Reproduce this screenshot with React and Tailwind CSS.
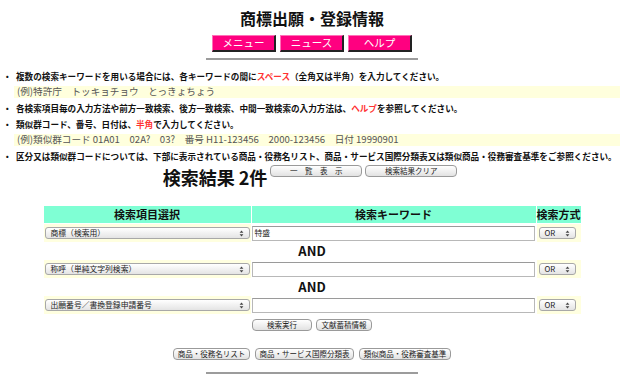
import React from "react";

const jp = "font-['Hiragino_Kaku_Gothic_Pro','Noto_Sans_CJK_JP',sans-serif]";

function Arrows() {
  return (
    <svg width="5" height="7" viewBox="0 0 5 7" className="shrink-0">
      <path d="M0.6 2.8L2.5 0.6L4.4 2.8Z M0.6 4.2L2.5 6.4L4.4 4.2Z" fill="#444" />
    </svg>
  );
}

function FakeSelect({ label, className = "" }) {
  return (
    <div
      className={`flex h-[12px] items-center justify-between rounded-[3px] border border-[#a8a8a8] bg-gradient-to-b from-white to-[#e4e4e4] px-[5px] text-[7.8px] leading-none text-[#222] ${className}`}
    >
      <span className="whitespace-nowrap">{label}</span>
      <Arrows />
    </div>
  );
}

function SmallButton({ children, className = "" }) {
  return (
    <button
      className={`flex h-[12px] items-center justify-center rounded-[4px] border border-[#9a9a9a] bg-gradient-to-b from-white to-[#e2e2e2] text-[7.5px] leading-none whitespace-nowrap text-[#222] ${className}`}
    >
      {children}
    </button>
  );
}

function PinkButton({ children }) {
  return (
    <button className="flex h-[17px] w-[64px] items-center justify-center border-t border-l border-t-[#ff70b8] border-l-[#ff70b8] border-r-2 border-b-2 border-r-[#222] border-b-[#222] bg-[#ff0080] text-[10.5px] leading-none text-white">
      {children}
    </button>
  );
}

function Bullet({ children }) {
  return (
    <div className="flex h-[16px] items-center font-bold text-[#111]">
      <span className="w-[16px] pl-[3px]">・</span>
      <span className="whitespace-nowrap">{children}</span>
    </div>
  );
}

function Example({ children }) {
  return (
    <div className="flex h-[16px] items-center pl-[14px] pr-[4px]">
      <div className="flex h-[12px] w-full items-center bg-[#ffffdd] pl-[3px] text-[9.6px] font-normal whitespace-pre text-[#555]">
        {children}
      </div>
    </div>
  );
}

function SearchRow({ label, value }) {
  return (
    <div className="flex h-[18px] gap-px">
      <div className="flex w-[207px] items-center bg-[#ffffe0] px-px">
        <FakeSelect label={label} className="w-full" />
      </div>
      <div className="flex w-[284px] items-center">
        <div className="flex h-[15px] w-[283px] items-center border border-[#b8b8b8] border-t-[#9a9a9a] bg-white pl-[2px] text-[7.8px] text-[#222]">
          {value}
        </div>
      </div>
      <div className="flex w-[44px] items-center bg-[#ffffe0] pl-[2px]">
        <FakeSelect label="OR" className="w-[37px]" />
      </div>
    </div>
  );
}

function AndRow() {
  return (
    <div className="flex h-[18px] items-center justify-center text-[13px] font-bold text-[#111]">
      AND
    </div>
  );
}

export default function App() {
  return (
    <div className={`h-[376px] w-[640px] overflow-hidden bg-white ${jp}`}>
      <div className="flex w-[624px] flex-col items-center">
        <h1 className="pt-[8px] text-[16px] leading-[20px] font-bold text-[#111]">
          商標出願・登録情報
        </h1>
        <div className="mt-[7px] flex gap-[4px]">
          <PinkButton>メニュー</PinkButton>
          <PinkButton>ニュース</PinkButton>
          <PinkButton>ヘルプ</PinkButton>
        </div>
        <div className="mt-[6px] h-[2px] w-[212px] bg-[#9c9c9c]" />

        <div className="mt-[8px] w-full text-[8.6px] leading-none">
          <Bullet>
            複数の検索キーワードを用いる場合には、各キーワードの間に
            <span className="text-[#ff3333]">スペース</span>
            （全角又は半角）を入力してください。
          </Bullet>
          <Example>(例)特許庁　トッキョチョウ　とっきょちょう</Example>
          <Bullet>
            各検索項目毎の入力方法や前方一致検索、後方一致検索、中間一致検索の入力方法は、
            <span className="text-[#ff3333]">ヘルプ</span>
            を参照してください。
          </Bullet>
          <Bullet>
            類似群コード、番号、日付は、
            <span className="text-[#ff3333]">半角</span>
            で入力してください。
          </Bullet>
          <Example>
            (例)類似群コード 01A01　02A?　03?　番号 H11-123456　2000-123456　日付 19990901
          </Example>
          <Bullet>
            区分又は類似群コードについては、下部に表示されている商品・役務名リスト、商品・サービス国際分類表又は類似商品・役務審査基準をご参照ください。
          </Bullet>
        </div>

        <div className="mt-px flex items-start gap-[3px] pr-[4px]">
          <h2 className="mt-px text-[18px] leading-[22px] font-bold text-[#111]">
            検索結果 2件
          </h2>
          <SmallButton className="w-[92px]">一　覧　表　示</SmallButton>
          <SmallButton className="w-[92px]">検索結果クリア</SmallButton>
        </div>

        <div className="mt-[18px] flex w-[537px] flex-col">
          <div className="mb-px flex h-[17px] gap-px text-[11px] leading-none font-bold text-[#111]">
            <div className="flex w-[207px] items-center justify-center bg-[#7fffd4]">検索項目選択</div>
            <div className="flex w-[284px] items-center justify-center bg-[#7fffd4]">検索キーワード</div>
            <div className="flex w-[44px] items-center justify-center whitespace-nowrap bg-[#7fffd4]">検索方式</div>
          </div>
          <SearchRow label="商標（検索用）" value="特盛" />
          <AndRow />
          <SearchRow label="称呼（単純文字列検索）" value="" />
          <AndRow />
          <SearchRow label="出願番号／書換登録申請番号" value="" />
        </div>

        <div className="mt-[5px] flex gap-[4px]">
          <SmallButton className="w-[60px]">検索実行</SmallButton>
          <SmallButton className="w-[56px]">文献蓄積情報</SmallButton>
        </div>

        <div className="mt-[17px] flex gap-[5px]">
          <SmallButton className="w-[77px]">商品・役務名リスト</SmallButton>
          <SmallButton className="w-[99px]">商品・サービス国際分類表</SmallButton>
          <SmallButton className="w-[92px]">類似商品・役務審査基準</SmallButton>
        </div>
        <div className="mt-[12px] h-[2px] w-[212px] bg-[#9c9c9c]" />
      </div>
    </div>
  );
}
